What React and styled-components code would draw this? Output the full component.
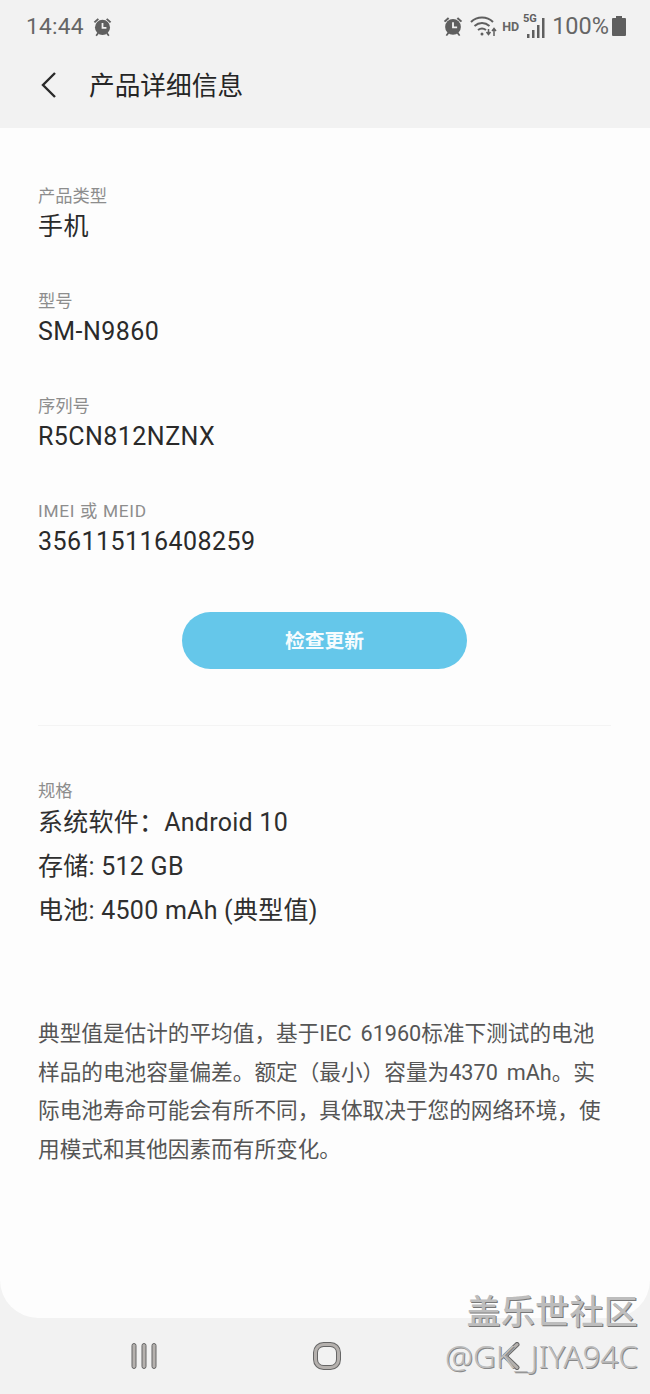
import styled, { createGlobalStyle } from "styled-components";

const GlobalStyle = createGlobalStyle`
  html, body {
    margin: 0;
    padding: 0;
    background: #f2f2f2;
  }
  body {
    font-family: Roboto, "Noto Sans CJK SC", sans-serif;
  }
`;

// ==== Page frame ====
const Phone = styled.div`
  position: relative;
  width: 650px;
  height: 1394px;
  display: flex;
  flex-direction: column;
  background: #f2f2f2;
  overflow: hidden;
`;

// ==== Status bar ====
const StatusBar = styled.div`
  height: 50px;
  box-sizing: border-box;
  padding: 2px 24px 0 26px;
  display: flex;
  align-items: center;
  justify-content: space-between;
  color: #666;
`;

const StatusGroup = styled.div`
  display: flex;
  align-items: center;
`;

const Clock = styled.span`
  font-size: 22.8px;
  letter-spacing: 0.2px;
  margin-right: 8px;
`;

const Percent = styled.span`
  font-size: 23.5px;
  margin: 0 3px 0 7px;
`;

const HdText = styled.span`
  font-size: 12.5px;
  font-weight: 700;
  margin: 0 4px 0 5px;
`;

const WifiWrap = styled.span`
  display: flex;
  margin-left: 6px;
`;

// ==== Header ====
const Header = styled.div`
  height: 78px;
  box-sizing: border-box;
  padding: 0 0 9px 40px;
  display: flex;
  align-items: center;
`;

const BackIcon = styled.svg`
  width: 20px;
  height: 28px;
  margin-right: 29px;
`;

const Title = styled.h1`
  margin: 0 0 3px;
  font-size: 25.7px;
  font-weight: 400;
  color: #252525;
`;

// ==== Main card ====
const Card = styled.main`
  height: 1190px;
  box-sizing: border-box;
  padding: 56px 38px 0;
  background: #fdfdfd;
  border-radius: 0 0 38px 38px;
`;

const InfoBlock = styled.section`
  height: 105px;
`;

const Label = styled.div`
  font-size: 17.3px;
  line-height: 24px;
  color: #8d8d8d;
  letter-spacing: ${(props) => props.$spread || 0}px;
`;

const Value = styled.div`
  font-size: 25px;
  letter-spacing: 0.45px;
  line-height: 36px;
  margin-top: 1px;
  color: #2a2a2a;
`;

const ButtonRow = styled.div`
  display: flex;
  justify-content: center;
  margin-top: 8px;
  padding-right: 1px;
`;

const UpdateButton = styled.button`
  width: 285px;
  height: 57px;
  padding: 0 0 2px;
  border: none;
  border-radius: 29px;
  background: #65c7ea;
  color: #f6fcfe;
  font-family: inherit;
  font-size: 19.8px;
  font-weight: 700;
`;

const Divider = styled.hr`
  margin: 56px 1px 53px 0;
  border: none;
  height: 1px;
  background: #f4f4f4;
`;

const SpecList = styled.div`
  margin-top: -2px;
`;

const SpecValue = styled.div`
  font-size: 25px;
  letter-spacing: 0.25px;
  line-height: 44px;
  color: #2f2f2f;
`;

const Note = styled.p`
  margin: 81.6px 0 0;
  width: 572px;
  font-size: 21.65px;
  line-height: 38.9px;
  word-spacing: 3.5px;
  color: #555;
`;

// ==== Navigation bar ====
const NavBar = styled.nav`
  flex: 1;
  display: flex;
  align-items: center;
  gap: 154px;
  padding: 0 0 1px 130px;
`;

const NavIcon = styled.svg`
  width: ${(props) => props.$w}px;
  height: 28px;
`;

// ==== Watermark over the bottom corner ====
const Watermark = styled.div`
  position: absolute;
  right: 12px;
  top: 1291px;
  text-align: right;
  color: #bdbdbd;
`;

const WatermarkTitle = styled.div`
  font-size: 34px;
  line-height: 42px;
  font-weight: 500;
  letter-spacing: 0.3px;
  text-shadow: 1px 1px 0 #777;
`;

const WatermarkUser = styled.div`
  font-family: "Noto Sans", sans-serif;
  font-size: 31.5px;
  font-weight: 300;
  line-height: 34px;
  margin-top: 6px;
  text-shadow: 1px 1px 0 #888;
`;

function AlarmIcon({ size }) {
  return (
    <svg width={size} height={size} viewBox="0 0 24 24" fill="#5f5f5f">
      <circle cx="12" cy="13" r="8.6" />
      <path d="M2 6.500 6.500 2.500 8 4 3.500 8zM22 6.500 17.500 2.500 16 4 20.500 8zM6 19l-2 3 1.500 1 2.500-3zM18 19l2 3-1.500 1-2.500-3z" />
      <path d="M12 8v5.500h4.500" fill="none" stroke="#f2f2f2" strokeWidth="2" />
    </svg>
  );
}

function WifiIcon() {
  return (
    <svg width="27" height="24" viewBox="0 0 27 24" fill="none" stroke="#5f5f5f" strokeWidth="2">
      <path d="M1 8C7 2 17 2 23 8" />
      <path d="M4.500 12C9 8 15 8 19.500 12" />
      <path d="M8 16c3-2.300 5-2.300 8 0" />
      <circle cx="12" cy="20" r="1.500" fill="#5f5f5f" stroke="none" />
      <path d="M18.500 15v5M16.500 18l2 2.500 2-2.500" strokeWidth="1.500" />
      <path d="M24 22v-7M22 17l2-2.500 2 2.500" strokeWidth="1.500" />
    </svg>
  );
}

function SignalIcon() {
  return (
    <svg width="22" height="26" viewBox="0 0 22 26" fill="#5f5f5f">
      <text x="0" y="9" fontFamily="Roboto, sans-serif" fontSize="11" fontWeight="700">5G</text>
      <rect x="4" y="21" width="2.500" height="4" />
      <rect x="9" y="17" width="2.500" height="8" />
      <rect x="14" y="12" width="2.500" height="13" />
      <rect x="19" y="5" width="2.500" height="20" />
    </svg>
  );
}

function BatteryIcon() {
  return (
    <svg width="14" height="20" viewBox="0 0 14 20" fill="#5f5f5f">
      <path d="M4 0h6v2h3a1 1 0 0 1 1 1v16a1 1 0 0 1-1 1H1a1 1 0 0 1-1-1V3a1 1 0 0 1 1-1h3z" />
    </svg>
  );
}

const info = [
  { label: "产品类型", value: "手机" },
  { label: "型号", value: "SM-N9860" },
  { label: "序列号", value: "R5CN812NZNX" },
  { label: "IMEI 或 MEID", value: "356115116408259", spread: 0.7 },
];

const specs = ["系统软件：Android 10", "存储: 512 GB", "电池: 4500 mAh (典型值)"];

export default function App() {
  return (
    <Phone>
      <GlobalStyle />
      <StatusBar>
        <StatusGroup>
          <Clock>14:44</Clock>
          <AlarmIcon size={21} />
        </StatusGroup>
        <StatusGroup>
          <AlarmIcon size={22} />
          <WifiWrap>
            <WifiIcon />
          </WifiWrap>
          <HdText>HD</HdText>
          <SignalIcon />
          <Percent>100%</Percent>
          <BatteryIcon />
        </StatusGroup>
      </StatusBar>

      <Header>
        <BackIcon viewBox="0 0 20 28" fill="none" stroke="#2a2a2a" strokeWidth="2.400">
          <path d="M15 2 3 14l12 12" />
        </BackIcon>
        <Title>产品详细信息</Title>
      </Header>

      <Card>
        {info.map((item) => (
          <InfoBlock key={item.label}>
            <Label $spread={item.spread}>{item.label}</Label>
            <Value>{item.value}</Value>
          </InfoBlock>
        ))}

        <ButtonRow>
          <UpdateButton>检查更新</UpdateButton>
        </ButtonRow>

        <Divider />

        <Label>规格</Label>
        <SpecList>
          {specs.map((line) => (
            <SpecValue key={line}>{line}</SpecValue>
          ))}
        </SpecList>

        <Note>
          典型值是估计的平均值，基于IEC 61960标准下测试的电池样品的电池容量偏差。额定（最小）容量为4370 mAh。实际电池寿命可能会有所不同，具体取决于您的网络环境，使用模式和其他因素而有所变化。
        </Note>
      </Card>

      <NavBar>
        <NavIcon $w={28} viewBox="0 0 28 28" fill="#b5b1ae" stroke="#666" strokeWidth="1">
          <rect x="2" y="1.500" width="4" height="25" rx="2" />
          <rect x="12" y="1.500" width="4" height="25" rx="2" />
          <rect x="22" y="1.500" width="4" height="25" rx="2" />
        </NavIcon>
        <NavIcon $w={30} viewBox="0 0 30 28" fill="none">
          <rect x="3.500" y="2.500" width="23" height="23" rx="8" stroke="#666" strokeWidth="5" />
          <rect x="3.500" y="2.500" width="23" height="23" rx="8" stroke="#b5b1ae" strokeWidth="3" />
        </NavIcon>
        <NavIcon $w={28} viewBox="0 0 28 28" fill="none" strokeLinecap="round" strokeLinejoin="round">
          <path d="M21 2.500 9 14l12 11.500" stroke="#666" strokeWidth="5" />
          <path d="M21 2.500 9 14l12 11.500" stroke="#b5b1ae" strokeWidth="3" />
        </NavIcon>
      </NavBar>

      <Watermark>
        <WatermarkTitle>盖乐世社区</WatermarkTitle>
        <WatermarkUser>@GK_JIYA94C</WatermarkUser>
      </Watermark>
    </Phone>
  );
}
